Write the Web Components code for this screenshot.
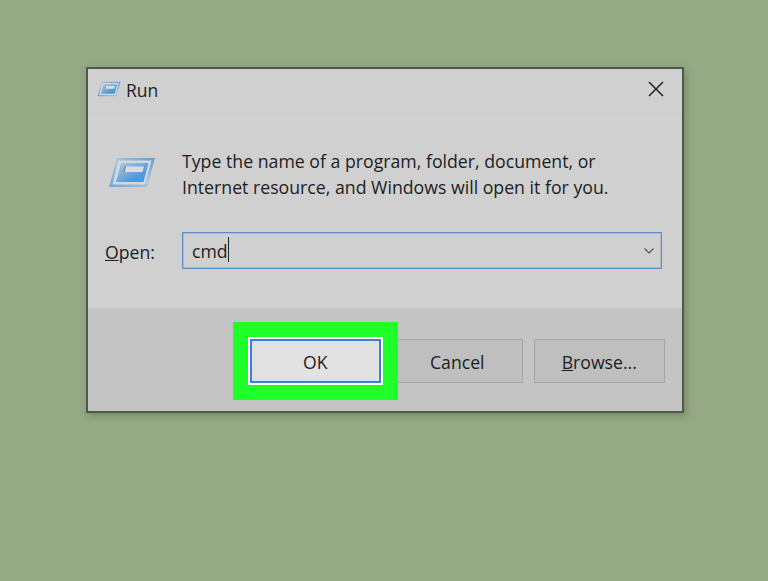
<!DOCTYPE html>
<html>
<head>
<meta charset="utf-8">
<title>Run</title>
<style>
  html, body { margin: 0; height: 100%; background: #96a985; }
  body { font-family: "Open Sans", "Noto Sans", sans-serif; overflow: hidden; }
</style>
</head>
<body>

<run-page>
  <run-dialog title="Run">
    <run-message>Type the name of a program, folder, document, or<br>Internet resource, and Windows will open it for you.</run-message>
    <run-combo value="cmd"></run-combo>
    <dlg-button slot="buttons" focused>OK</dlg-button>
    <dlg-button slot="buttons">Cancel</dlg-button>
    <dlg-button slot="buttons"><u>B</u>rowse...</dlg-button>
  </run-dialog>
</run-page>

<script>
// same artwork for the title bar and the dialog body, only the size differs
const RUN_ICON = `
<svg viewBox="0 0 48 31" width="100%" height="100%" aria-hidden="true">
  <defs>
    <linearGradient id="g" x1="0" y1="0" x2="1" y2="1">
      <stop offset="0" stop-color="#b4cadd"/>
      <stop offset=".7" stop-color="#4f9ad8"/>
      <stop offset="1" stop-color="#4f9ad8"/>
    </linearGradient>
    <linearGradient id="f" x1="0" y1="1" x2="1" y2="0">
      <stop offset="0" stop-color="#6ea6d8"/>
      <stop offset=".5" stop-color="#a9c6df"/>
      <stop offset="1" stop-color="#5f9fd8"/>
    </linearGradient>
  </defs>
  <path d="M9 1 L47 1 L39 30 L1 30 Z" fill="url(#f)"/>
  <path d="M10.500 3.500 L43.500 3.500 L37 27.500 L4.500 27.500 Z" fill="#d3d8dc"/>
  <path d="M13 6 L40.500 6 L35.500 25 L8 25 Z" fill="url(#g)"/>
  <path d="M17.500 9.500 L36 9.500 L34.500 15 L16 15 Z" fill="#dadee1"/>
  <path d="M17.500 9.500 L16 15" stroke="#4a545c" stroke-width=".8" fill="none"/>
</svg>`

class RunPage extends HTMLElement {
    constructor() {
        super()
        let s = this.attachShadow({mode: 'open'})
        s.innerHTML = `
<style>
  :host { display: block; padding: 67px 0 0 86px; }
</style>
<slot></slot>`
    }
}

class RunDialog extends HTMLElement {
    constructor() {
        super()
        let title = this.getAttribute('title')
        let s = this.attachShadow({mode: 'open'})
        s.innerHTML = `
<style>
  :host {
    display: flex;
    flex-direction: column;
    box-sizing: border-box;
    width: 598px;
    height: 346px;
    background: #d0d0d0;
    border: 2px solid #4d5a49;
    box-shadow: 2px 3px 7px rgba(60, 75, 50, .35);
    color: #1d1d1f;
  }
  #titlebar {
    display: flex;
    align-items: center;
    height: 43px;
    padding: 0 18px 0 9px;
    border-bottom: 1px solid #cbcbcb;
    font-size: 17.500px;
  }
  #small-icon { width: 24px; height: 16px; margin-right: 5px; margin-top: -10px; }
  #title { flex: 1; margin-top: -2px; }
  #close { width: 16px; height: 16px; margin-top: -4px; }
  #body { flex: 1; padding: 35px 20px 0 20px; }
  #footer {
    display: flex;
    justify-content: flex-end;
    gap: 11.500px;
    height: 103px;
    box-sizing: border-box;
    padding: 31px 17.500px 0 0;
    background: #c4c4c4;
  }
</style>
<div id="titlebar">
  <div id="small-icon">${RUN_ICON}</div>
  <div id="title">${title}</div>
  <svg id="close" viewBox="0 0 16 16"><path d="M1 1 L15 15 M15 1 L1 15" stroke="#222" stroke-width="1.500" fill="none"/></svg>
</div>
<div id="body"><slot></slot></div>
<div id="footer"><slot name="buttons"></slot></div>`
    }
}

class RunMessage extends HTMLElement {
    constructor() {
        super()
        let s = this.attachShadow({mode: 'open'})
        s.innerHTML = `
<style>
  :host { display: flex; height: 84px; }
  #icon { width: 48px; height: 31px; margin: 9px 26px 0 0; }
  #text { font-size: 17.720px; line-height: 26px; }
</style>
<div id="icon">${RUN_ICON}</div>
<div id="text"><slot></slot></div>`
    }
}

class RunCombo extends HTMLElement {
    constructor() {
        super()
        let value = this.getAttribute('value')
        let s = this.attachShadow({mode: 'open'})
        s.innerHTML = `
<style>
  :host { display: flex; align-items: center; height: 37px; font-size: 17.650px; }
  #label { width: 77px; margin: 2px 0 0 -3px; }
  #box {
    flex: 1;
    display: flex;
    align-items: center;
    box-sizing: border-box;
    height: 37px;
    padding: 0 7px 0 9px;
    border: 1px solid #5c8ccb;
    box-shadow: inset 0 0 0 1px rgba(92, 140, 203, .3);
  }
  #value { flex: 1; display: flex; align-items: center; }
  #caret { width: 1px; height: 25px; background: #222; margin-top: -2px; }
  svg { width: 10px; height: 6px; }
</style>
<div id="label"><u>O</u>pen:</div>
<div id="box">
  <div id="value"><span>${value}</span><span id="caret"></span></div>
  <svg viewBox="0 0 10 6"><path d="M.500 .500 L5 5 L9.500 .500" stroke="#555" stroke-width="1.200" fill="none"/></svg>
</div>`
    }
}

class DlgButton extends HTMLElement {
    constructor() {
        super()
        let s = this.attachShadow({mode: 'open'})
        s.innerHTML = `
<style>
  :host {
    display: flex;
    align-items: center;
    justify-content: center;
    box-sizing: border-box;
    width: 130.500px;
    height: 44px;
    padding-top: 2px;
    background: #bfbfbf;
    border: 1px solid #a5a5a5;
    font-size: 17.650px;
    color: #1d1d1f;
  }
  /* focused default button, the green highlight sits over the next button */
  :host([focused]) {
    position: relative;
    z-index: 1;
    background: #e2e2e2;
    border: 2px solid #3f7fdc;
    box-shadow: 0 0 0 2px #fff, 0 0 0 17px #1eff2a;
  }
</style>
<slot></slot>`
    }
}

customElements.define('run-page', RunPage)
customElements.define('run-dialog', RunDialog)
customElements.define('run-message', RunMessage)
customElements.define('run-combo', RunCombo)
customElements.define('dlg-button', DlgButton)
</script>
</body>
</html>
